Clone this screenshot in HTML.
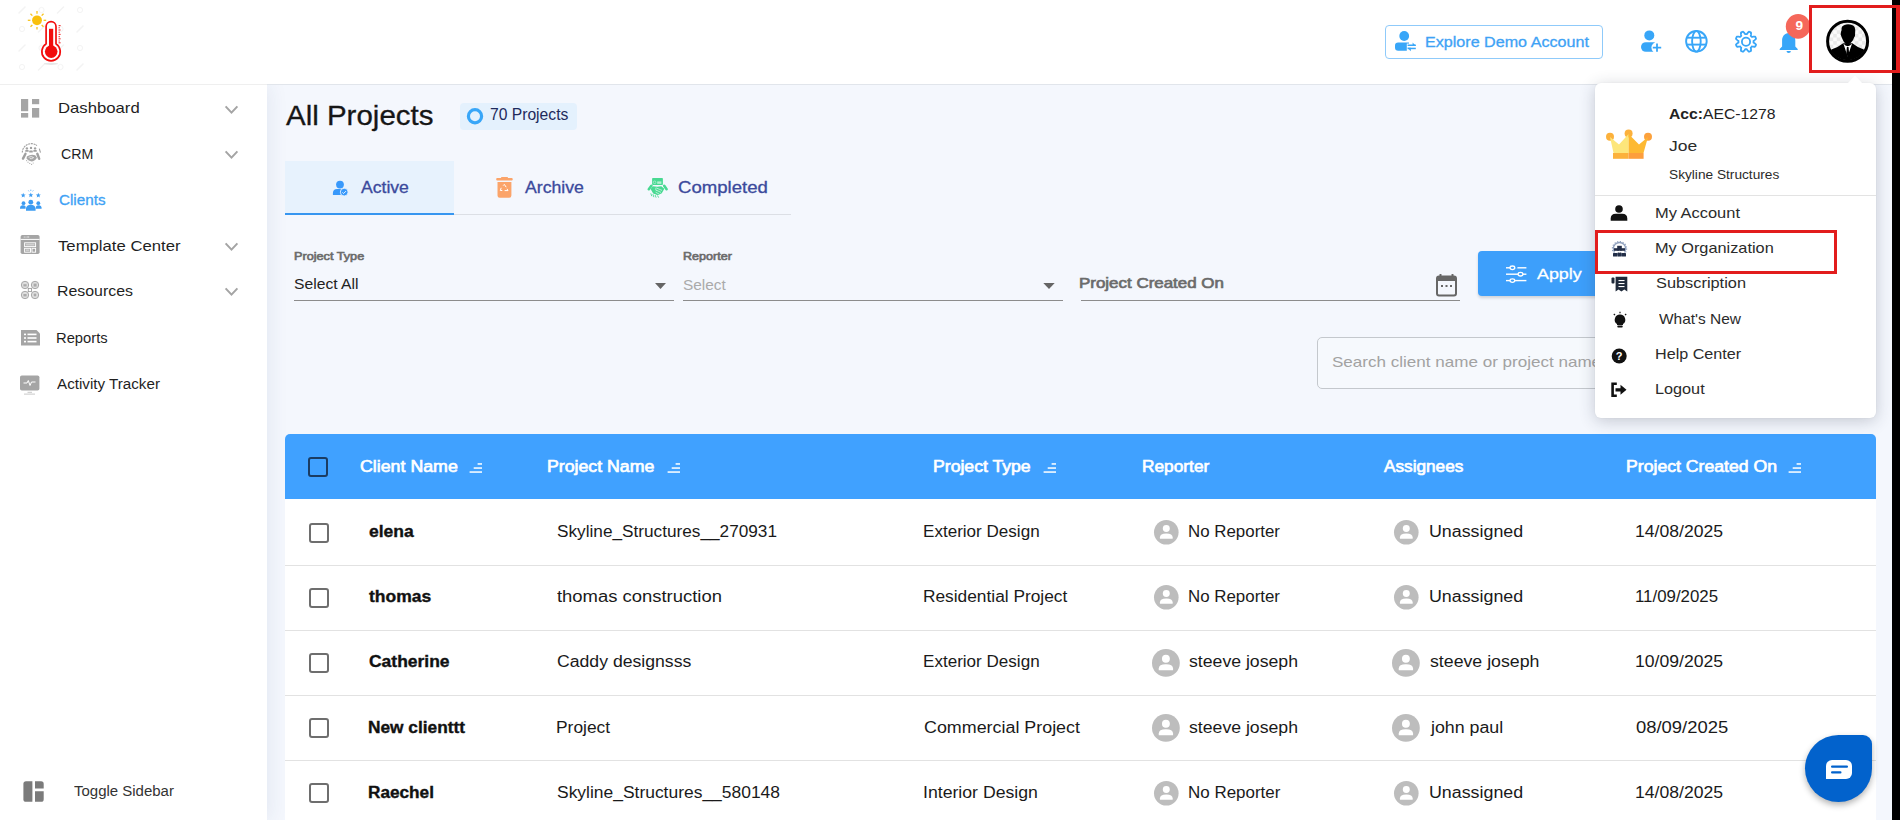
<!DOCTYPE html>
<html><head><meta charset="utf-8"><title>All Projects</title>
<style>
*{margin:0;padding:0;box-sizing:border-box}
html,body{width:1900px;height:820px;overflow:hidden}
body{background:#f4f7fd;font-family:"Liberation Sans",sans-serif;position:relative}
.a{position:absolute}
.t{position:absolute;white-space:nowrap;transform-origin:0 0}
svg{position:absolute;overflow:visible}
.m{-webkit-text-stroke:0.3px currentColor}
.sb{font-weight:400!important;-webkit-text-stroke:0.65px currentColor}
.bb{-webkit-text-stroke:0.35px currentColor}

</style></head><body>
<!-- sidebar -->
<div class="a" style="left:0;top:85px;width:267px;height:735px;background:#fff;box-shadow:3px 0 18px rgba(40,60,110,.08)"></div>
<!-- header -->
<div class="a" style="left:0;top:0;width:1900px;height:85px;background:#fff;border-bottom:1px solid #efefef"></div>
<div class="a" style="left:267px;top:84px;width:1633px;height:1px;background:#e1e5eb"></div>
<!-- tabs -->
<div class="a" style="left:285px;top:161px;width:169px;height:54px;background:#e7f2fd"></div>
<div class="a" style="left:454px;top:213.5px;width:337px;height:1px;background:#dcdfe5"></div>
<div class="a" style="left:285px;top:213px;width:169px;height:2px;background:#3796f0"></div>
<!-- badge -->
<div class="a" style="left:460px;top:103px;width:117px;height:27px;background:#e4f1fd;border-radius:4px"></div>
<!-- filter underlines -->
<div class="a" style="left:294px;top:299.5px;width:380px;height:1.5px;background:#8c8c8c"></div>
<div class="a" style="left:683px;top:299.5px;width:380px;height:1.5px;background:#8c8c8c"></div>
<div class="a" style="left:1080.6px;top:299.5px;width:379px;height:1.5px;background:#8c8c8c"></div>
<!-- apply btn -->
<div class="a" style="left:1478px;top:251px;width:140px;height:45px;background:#3d9ffb;border-radius:4px;box-shadow:0 2px 3px rgba(0,0,0,.15)"></div>
<!-- search -->
<div class="a" style="left:1317.4px;top:337.2px;width:320px;height:51.4px;border:1px solid #c4c8cd;border-radius:5px;background:#f6f9fd"></div>
<!-- table -->
<div class="a" style="left:285px;top:434px;width:1591px;height:65px;background:#40a1ff;border-radius:5px 5px 0 0"></div>
<div class="a" style="left:285px;top:499px;width:1591px;height:330px;background:#fff"></div>
<div class="a" style="left:285px;top:565px;width:1591px;height:1px;background:#e2e2e2"></div>
<div class="a" style="left:285px;top:630px;width:1591px;height:1px;background:#e2e2e2"></div>
<div class="a" style="left:285px;top:695px;width:1591px;height:1px;background:#e2e2e2"></div>
<div class="a" style="left:285px;top:760px;width:1591px;height:1px;background:#e2e2e2"></div>
<!-- checkboxes -->
<div class="a" style="left:307.6px;top:457px;width:20px;height:20px;border:2px solid #1b3c62;border-radius:3px"></div>
<div class="a" style="left:309.4px;top:522.6px;width:20px;height:20px;border:2px solid #6e6e6e;border-radius:3px"></div>
<div class="a" style="left:309.4px;top:587.6px;width:20px;height:20px;border:2px solid #6e6e6e;border-radius:3px"></div>
<div class="a" style="left:309.4px;top:652.6px;width:20px;height:20px;border:2px solid #6e6e6e;border-radius:3px"></div>
<div class="a" style="left:309.4px;top:717.6px;width:20px;height:20px;border:2px solid #6e6e6e;border-radius:3px"></div>
<div class="a" style="left:309.4px;top:782.6px;width:20px;height:20px;border:2px solid #6e6e6e;border-radius:3px"></div>
<!-- explore btn -->
<div class="a" style="left:1385px;top:25px;width:218px;height:34px;border:1px solid #8fcafa;border-radius:4px;background:#fff"></div>

<svg style="left:0px;top:0px" width="90" height="84" viewBox="0 0 90 84"><line x1="19" y1="13" x2="25" y2="7" stroke="#f3f3f3" stroke-width="1.5" stroke-linecap="round"/><circle cx="22" cy="29" r="2.6" fill="none" stroke="#f4f4f4" stroke-width="1"/><line x1="19" y1="51" x2="25" y2="45" stroke="#f3f3f3" stroke-width="1.5" stroke-linecap="round"/><circle cx="22" cy="67" r="2.6" fill="none" stroke="#f4f4f4" stroke-width="1"/><circle cx="41.5" cy="10" r="2.6" fill="none" stroke="#f4f4f4" stroke-width="1"/><line x1="38.5" y1="32" x2="44.5" y2="26" stroke="#f3f3f3" stroke-width="1.5" stroke-linecap="round"/><circle cx="41.5" cy="48" r="2.6" fill="none" stroke="#f4f4f4" stroke-width="1"/><line x1="38.5" y1="70" x2="44.5" y2="64" stroke="#f3f3f3" stroke-width="1.5" stroke-linecap="round"/><line x1="57.5" y1="13" x2="63.5" y2="7" stroke="#f3f3f3" stroke-width="1.5" stroke-linecap="round"/><circle cx="60.5" cy="29" r="2.6" fill="none" stroke="#f4f4f4" stroke-width="1"/><line x1="57.5" y1="51" x2="63.5" y2="45" stroke="#f3f3f3" stroke-width="1.5" stroke-linecap="round"/><circle cx="60.5" cy="67" r="2.6" fill="none" stroke="#f4f4f4" stroke-width="1"/><circle cx="80" cy="10" r="2.6" fill="none" stroke="#f4f4f4" stroke-width="1"/><line x1="77" y1="32" x2="83" y2="26" stroke="#f3f3f3" stroke-width="1.5" stroke-linecap="round"/><circle cx="80" cy="48" r="2.6" fill="none" stroke="#f4f4f4" stroke-width="1"/><line x1="77" y1="70" x2="83" y2="64" stroke="#f3f3f3" stroke-width="1.5" stroke-linecap="round"/></svg>
<svg style="left:0px;top:0px" width="90" height="84" viewBox="0 0 90 84">
<ellipse cx="51" cy="63.8" rx="7" ry="1.1" fill="#e6e6e6"/>
<circle cx="37" cy="20.3" r="4.9" fill="#f9c00c"/><line x1="43.60" y1="20.30" x2="46.20" y2="20.30" stroke="#f8c31a" stroke-width="1.3"/><line x1="41.67" y1="24.97" x2="43.51" y2="26.81" stroke="#f8c31a" stroke-width="1.3"/><line x1="37.00" y1="26.90" x2="37.00" y2="29.50" stroke="#f8c31a" stroke-width="1.3"/><line x1="32.33" y1="24.97" x2="30.49" y2="26.81" stroke="#f8c31a" stroke-width="1.3"/><line x1="30.40" y1="20.30" x2="27.80" y2="20.30" stroke="#f8c31a" stroke-width="1.3"/><line x1="32.33" y1="15.63" x2="30.49" y2="13.79" stroke="#f8c31a" stroke-width="1.3"/><line x1="37.00" y1="13.70" x2="37.00" y2="11.10" stroke="#f8c31a" stroke-width="1.3"/><line x1="41.67" y1="15.63" x2="43.51" y2="13.79" stroke="#f8c31a" stroke-width="1.3"/>
<path d="M46.1 43.9 V26.6 A4.95 4.95 0 0 1 56 26.6 V43.9 A9.2 9.2 0 1 1 46.1 43.9 Z" fill="#fff" stroke="#f20d0d" stroke-width="1.7"/>
<rect x="49" y="28.8" width="4.2" height="20" fill="#f20d0d"/>
<circle cx="51.2" cy="51.6" r="6.3" fill="#f20d0d"/>
<line x1="58.6" y1="25.6" x2="60.6" y2="25.6" stroke="#f03030" stroke-width="1.1"/><line x1="58.6" y1="27.8" x2="59.8" y2="27.8" stroke="#f03030" stroke-width="1.1"/><line x1="58.6" y1="30" x2="60.6" y2="30" stroke="#f03030" stroke-width="1.1"/><line x1="58.6" y1="32.2" x2="59.8" y2="32.2" stroke="#f03030" stroke-width="1.1"/><line x1="58.6" y1="34.4" x2="60.6" y2="34.4" stroke="#f03030" stroke-width="1.1"/><line x1="58.6" y1="36.6" x2="59.8" y2="36.6" stroke="#f03030" stroke-width="1.1"/><line x1="58.6" y1="38.8" x2="60.6" y2="38.8" stroke="#f03030" stroke-width="1.1"/><line x1="58.6" y1="41" x2="59.8" y2="41" stroke="#f03030" stroke-width="1.1"/><line x1="58.6" y1="42.8" x2="60.6" y2="42.8" stroke="#f03030" stroke-width="1.1"/>
</svg>
<svg style="left:15px;top:95px" width="30" height="26" viewBox="15 95 30 26"><g fill="#a5a5a5"><rect x="21" y="99" width="7.2" height="12.2"/><rect x="32" y="99" width="7.2" height="5.2"/><rect x="21" y="113" width="7.2" height="4.6"/><rect x="32" y="108" width="7.2" height="9.6"/></g></svg>
<svg style="left:15px;top:138px" width="35" height="32" viewBox="15 138 35 32"><g fill="none" stroke="#a0a0a0" stroke-width="1.1">
<path d="M22.3 152.6 A9 9 0 0 1 36.9 145.6" stroke-dasharray="2 0.7"/><path d="M39.3 148.6 L40.5 152.6"/></g>
<g fill="#a0a0a0"><circle cx="26.9" cy="148.4" r="1.2"/><circle cx="31" cy="147.9" r="1.2"/><circle cx="35.1" cy="148.4" r="1.2"/>
<rect x="25.2" y="150" width="3.5" height="1.8" rx="0.6"/><rect x="29.2" y="150.6" width="3.6" height="1.9" rx="0.6"/><rect x="33.3" y="150" width="3.5" height="1.8" rx="0.6"/></g>
<g stroke="#a0a0a0" stroke-width="2.4" stroke-linecap="round"><line x1="23" y1="158.6" x2="25.5" y2="153.8"/><line x1="37.3" y1="153.8" x2="39.2" y2="158.8"/></g>
<path d="M26.8 156.5 Q31 153.6 35.2 155.2 L37 157.8 Q34.5 161.5 31.5 161.6 Q28.5 161 26.6 158.8 Z" fill="#a5a5a5"/>
<path d="M28.6 157.4 Q31.2 155.6 33.6 157.6 Q31.6 159.2 29.8 158.6" fill="none" stroke="#fff" stroke-width="0.7"/>
<g fill="#b0b0b0"><circle cx="26.6" cy="160.6" r="0.6"/><circle cx="28" cy="162.2" r="0.6"/><circle cx="29.8" cy="163.4" r="0.6"/><circle cx="31.6" cy="164.4" r="0.6"/><circle cx="33.2" cy="163" r="0.6"/></g></svg>
<svg style="left:15px;top:185px" width="32" height="30" viewBox="15 185 32 30"><g fill="#3d9cf2"><polygon points="23.20,192.80 23.89,194.45 25.67,194.60 24.31,195.76 24.73,197.50 23.20,196.57 21.67,197.50 22.09,195.76 20.73,194.60 22.51,194.45"/><polygon points="30.80,192.60 31.49,194.25 33.27,194.40 31.91,195.56 32.33,197.30 30.80,196.37 29.27,197.30 29.69,195.56 28.33,194.40 30.11,194.25"/><polygon points="38.30,192.80 38.99,194.45 40.77,194.60 39.41,195.76 39.83,197.50 38.30,196.57 36.77,197.50 37.19,195.76 35.83,194.60 37.61,194.45"/>
<circle cx="30.8" cy="202.2" r="2.4"/><circle cx="23.5" cy="203.2" r="1.9"/><circle cx="38.3" cy="203.2" r="1.9"/>
<path d="M26 210.8 V208.3 A4.8 3.6 0 0 1 35.6 208.3 V210.8 Z"/>
<path d="M20 208.8 V207.5 A3 2.4 0 0 1 25.6 206.5 V208.8 Z"/><path d="M41.6 208.8 V207.5 A3 2.4 0 0 0 36 206.5 V208.8 Z"/>
</g><g stroke="#3d9cf2" stroke-width="0.7"><line x1="30.8" y1="189.6" x2="30.8" y2="191"/><line x1="28.3" y1="190.4" x2="29" y2="191.4"/><line x1="33.3" y1="190.4" x2="32.6" y2="191.4"/></g></svg>
<svg style="left:15px;top:230px" width="30" height="30" viewBox="15 230 30 30"><rect x="20.6" y="235" width="19" height="19" rx="1.8" fill="#a5a5a5"/>
<rect x="20.6" y="238.9" width="19" height="1" fill="#fff"/>
<g fill="#fff"><circle cx="24.2" cy="237" r="0.5"/><circle cx="26" cy="237" r="0.5"/><rect x="27.2" y="236.6" width="2" height="0.8"/></g>
<g fill="none" stroke="#fff" stroke-width="0.95"><rect x="24.6" y="242.8" width="11" height="3.8"/><rect x="24.6" y="248.3" width="5.9" height="3.9"/><rect x="32" y="248.3" width="3.6" height="3.9"/></g>
<g fill="#d0d0d0"><rect x="25.6" y="243.8" width="9" height="1.8"/><rect x="25.6" y="249.3" width="3.9" height="1.9"/></g></svg>
<svg style="left:15px;top:276px" width="30" height="30" viewBox="15 276 30 30"><g fill="#dedede" stroke="#a2a2a2" stroke-width="0.9"><circle cx="25" cy="285" r="3.7"/><circle cx="35" cy="285" r="3.7"/><circle cx="25" cy="295" r="3.7"/><circle cx="35" cy="295" r="3.7"/></g>
<rect x="28.3" y="288.4" width="3.2" height="3.2" fill="#fff" stroke="#9e9e9e" stroke-width="0.9"/>
<g fill="#ababab"><rect x="23.4" y="284.2" width="3.2" height="2.2"/><rect x="33.6" y="283.6" width="3" height="3"/><rect x="23.4" y="294" width="3.2" height="2.4"/><circle cx="35" cy="295" r="1.4"/></g></svg>
<svg style="left:15px;top:325px" width="30" height="26" viewBox="15 325 30 26"><path d="M21 330 H36.5 L40 333.5 V345.6 H21 Z" fill="#a5a5a5"/>
<g fill="#fff"><rect x="24" y="333.6" width="2" height="1.6"/><rect x="27.5" y="333.6" width="9" height="1.6"/><rect x="24" y="337.2" width="2" height="1.6"/><rect x="27.5" y="337.2" width="9" height="1.6"/><rect x="24" y="340.8" width="2" height="1.6"/><rect x="27.5" y="340.8" width="9" height="1.6"/></g></svg>
<svg style="left:15px;top:370px" width="30" height="30" viewBox="15 370 30 30"><rect x="20" y="375.4" width="19.4" height="15.2" rx="1.8" fill="#a5a5a5"/>
<polyline points="23.5,383 27,383 28.3,380.5 30,385.5 31.5,382 35.5,382" fill="none" stroke="#fff" stroke-width="1"/>
<rect x="27.5" y="391.8" width="4.5" height="1" fill="#c8c8c8"/><rect x="24" y="393.6" width="11" height="1" fill="#c8c8c8"/></svg>
<svg style="left:20px;top:778px" width="28" height="28" viewBox="20 778 28 28"><g fill="#7b7b7b"><path d="M26 781.3 H32.4 V801.8 H26 A2.6 2.6 0 0 1 23.4 799.2 V783.9 A2.6 2.6 0 0 1 26 781.3 Z"/>
<path d="M35 781.3 H41.1 A2.6 2.6 0 0 1 43.7 783.9 V788.6 H35 Z"/><path d="M35 791.2 H43.7 V799.2 A2.6 2.6 0 0 1 41.1 801.8 H35 Z"/></g></svg>
<svg style="left:220px;top:101.5px" width="24" height="16" viewBox="220 101.5 24 16"><polyline points="225.6,105.9 231.5,112.1 237.4,105.9" fill="none" stroke="#a4a4a4" stroke-width="2"/></svg>
<svg style="left:220px;top:146.5px" width="24" height="16" viewBox="220 146.5 24 16"><polyline points="225.6,150.9 231.5,157.1 237.4,150.9" fill="none" stroke="#a4a4a4" stroke-width="2"/></svg>
<svg style="left:220px;top:239px" width="24" height="16" viewBox="220 239 24 16"><polyline points="225.6,243.4 231.5,249.6 237.4,243.4" fill="none" stroke="#a4a4a4" stroke-width="2"/></svg>
<svg style="left:220px;top:284px" width="24" height="16" viewBox="220 284 24 16"><polyline points="225.6,288.4 231.5,294.6 237.4,288.4" fill="none" stroke="#a4a4a4" stroke-width="2"/></svg>
<svg style="left:1390px;top:28px" width="30" height="26" viewBox="1390 28 30 26"><g fill="#38a6f8"><circle cx="1404.2" cy="36" r="4.9"/><path d="M1398.2 42.4 H1409 V50.8 H1398.2 A3.2 3.2 0 0 1 1395 47.6 V45.6 A3.2 3.2 0 0 1 1398.2 42.4 Z"/></g>
<rect x="1406.8" y="43.6" width="10" height="8.2" fill="#fff"/>
<g fill="#38a6f8"><rect x="1407.6" y="44.5" width="8.2" height="1.5"/><path d="M1412.6 42.6 L1416 46 L1412.6 46 Z"/><rect x="1407.6" y="47.7" width="8.2" height="1.5"/><path d="M1410.8 51.2 L1407.4 47.7 L1410.8 47.7 Z"/></g></svg>
<svg style="left:1636px;top:26px" width="30" height="30" viewBox="1636 26 30 30"><g fill="#38a6f8"><circle cx="1649.3" cy="35.4" r="5"/><path d="M1645.8 42.2 H1654.8 V51.8 H1645.8 A4.8 4.8 0 0 1 1645.8 42.2 Z"/></g>
<circle cx="1657" cy="47.6" r="5.6" fill="#fff"/>
<path d="M1657 43.4 V51.8 M1652.8 47.6 H1661.2" stroke="#38a6f8" stroke-width="1.8"/></svg>
<svg style="left:1680px;top:25px" width="34" height="34" viewBox="1680 25 34 34"><g fill="none" stroke="#38a6f8" stroke-width="1.9"><circle cx="1696.4" cy="41.3" r="10.3"/><ellipse cx="1696.4" cy="41.3" rx="4.3" ry="10.3"/><line x1="1687" y1="37.7" x2="1705.8" y2="37.7"/><line x1="1687" y1="44.6" x2="1705.8" y2="44.6"/></g></svg>
<svg style="left:1730px;top:26px" width="32" height="32" viewBox="1730 26 32 32"><polygon points="1753.55,41.70 1753.55,41.90 1753.54,42.10 1753.53,42.29 1753.51,42.49 1753.84,42.73 1754.23,43.00 1754.63,43.30 1755.03,43.62 1755.40,43.96 1755.74,44.31 1756.02,44.67 1755.94,44.93 1755.85,45.19 1755.76,45.44 1755.65,45.70 1755.55,45.95 1755.43,46.20 1755.31,46.44 1755.18,46.69 1754.74,46.74 1754.25,46.75 1753.74,46.73 1753.23,46.67 1752.74,46.60 1752.28,46.52 1751.87,46.45 1751.74,46.60 1751.61,46.75 1751.48,46.90 1751.34,47.04 1751.20,47.18 1751.05,47.31 1750.90,47.44 1750.75,47.57 1750.82,47.98 1750.90,48.44 1750.97,48.93 1751.03,49.44 1751.05,49.95 1751.04,50.44 1750.99,50.88 1750.74,51.01 1750.50,51.13 1750.25,51.25 1750.00,51.35 1749.74,51.46 1749.49,51.55 1749.23,51.64 1748.97,51.72 1748.61,51.44 1748.26,51.10 1747.92,50.73 1747.60,50.33 1747.30,49.93 1747.03,49.54 1746.79,49.21 1746.59,49.23 1746.40,49.24 1746.20,49.25 1746.00,49.25 1745.80,49.25 1745.60,49.24 1745.41,49.23 1745.21,49.21 1744.97,49.54 1744.70,49.93 1744.40,50.33 1744.08,50.73 1743.74,51.10 1743.39,51.44 1743.03,51.72 1742.77,51.64 1742.51,51.55 1742.26,51.46 1742.00,51.35 1741.75,51.25 1741.50,51.13 1741.26,51.01 1741.01,50.88 1740.96,50.44 1740.95,49.95 1740.97,49.44 1741.03,48.93 1741.10,48.44 1741.18,47.98 1741.25,47.57 1741.10,47.44 1740.95,47.31 1740.80,47.18 1740.66,47.04 1740.52,46.90 1740.39,46.75 1740.26,46.60 1740.13,46.45 1739.72,46.52 1739.26,46.60 1738.77,46.67 1738.26,46.73 1737.75,46.75 1737.26,46.74 1736.82,46.69 1736.69,46.44 1736.57,46.20 1736.45,45.95 1736.35,45.70 1736.24,45.44 1736.15,45.19 1736.06,44.93 1735.98,44.67 1736.26,44.31 1736.60,43.96 1736.97,43.62 1737.37,43.30 1737.77,43.00 1738.16,42.73 1738.49,42.49 1738.47,42.29 1738.46,42.10 1738.45,41.90 1738.45,41.70 1738.45,41.50 1738.46,41.30 1738.47,41.11 1738.49,40.91 1738.16,40.67 1737.77,40.40 1737.37,40.10 1736.97,39.78 1736.60,39.44 1736.26,39.09 1735.98,38.73 1736.06,38.47 1736.15,38.21 1736.24,37.96 1736.35,37.70 1736.45,37.45 1736.57,37.20 1736.69,36.96 1736.82,36.71 1737.26,36.66 1737.75,36.65 1738.26,36.67 1738.77,36.73 1739.26,36.80 1739.72,36.88 1740.13,36.95 1740.26,36.80 1740.39,36.65 1740.52,36.50 1740.66,36.36 1740.80,36.22 1740.95,36.09 1741.10,35.96 1741.25,35.83 1741.18,35.42 1741.10,34.96 1741.03,34.47 1740.97,33.96 1740.95,33.45 1740.96,32.96 1741.01,32.52 1741.26,32.39 1741.50,32.27 1741.75,32.15 1742.00,32.05 1742.26,31.94 1742.51,31.85 1742.77,31.76 1743.03,31.68 1743.39,31.96 1743.74,32.30 1744.08,32.67 1744.40,33.07 1744.70,33.47 1744.97,33.86 1745.21,34.19 1745.41,34.17 1745.60,34.16 1745.80,34.15 1746.00,34.15 1746.20,34.15 1746.40,34.16 1746.59,34.17 1746.79,34.19 1747.03,33.86 1747.30,33.47 1747.60,33.07 1747.92,32.67 1748.26,32.30 1748.61,31.96 1748.97,31.68 1749.23,31.76 1749.49,31.85 1749.74,31.94 1750.00,32.05 1750.25,32.15 1750.50,32.27 1750.74,32.39 1750.99,32.52 1751.04,32.96 1751.05,33.45 1751.03,33.96 1750.97,34.47 1750.90,34.96 1750.82,35.42 1750.75,35.83 1750.90,35.96 1751.05,36.09 1751.20,36.22 1751.34,36.36 1751.48,36.50 1751.61,36.65 1751.74,36.80 1751.87,36.95 1752.28,36.88 1752.74,36.80 1753.23,36.73 1753.74,36.67 1754.25,36.65 1754.74,36.66 1755.18,36.71 1755.31,36.96 1755.43,37.20 1755.55,37.45 1755.65,37.70 1755.76,37.96 1755.85,38.21 1755.94,38.47 1756.02,38.73 1755.74,39.09 1755.40,39.44 1755.03,39.78 1754.63,40.10 1754.23,40.40 1753.84,40.67 1753.51,40.91 1753.53,41.11 1753.54,41.30 1753.55,41.50" fill="none" stroke="#38a6f8" stroke-width="1.8" stroke-linejoin="round"/><circle cx="1746" cy="41.7" r="4.1" fill="none" stroke="#38a6f8" stroke-width="1.8"/></svg>
<svg style="left:1775px;top:28px" width="28" height="30" viewBox="1775 28 28 30"><g fill="#38a6f8"><path d="M1788.7 33 C1784.5 33.3 1782.1 36.5 1782.1 40.5 V46.6 L1779.7 48.9 V50 H1797.7 V48.9 L1795.3 46.6 V40.5 C1795.3 36.5 1792.9 33.3 1788.7 33 Z"/><path d="M1786.5 50.9 H1790.9 A2.2 2.1 0 0 1 1786.5 50.9 Z"/></g></svg>
<svg style="left:470px;top:108px" width="14" height="16" viewBox="470 108 14 16"><circle cx="475" cy="116.2" r="6.6" fill="none" stroke="#38a6f8" stroke-width="3.2"/></svg>
<svg style="left:330px;top:178px" width="22" height="22" viewBox="330 178 22 22"><g fill="#3899fb"><circle cx="340" cy="184.6" r="3.9"/><path d="M332.9 195 V193 A4.2 4.2 0 0 1 337.1 189 H341.5 V195 Z"/></g>
<circle cx="344.2" cy="192.1" r="3.9" fill="#3899fb" stroke="#e7f2fd" stroke-width="0.9"/><polyline points="342.4,192.4 343.6,193.5 346,191.1" fill="none" stroke="#fff" stroke-width="0.9"/></svg>
<svg style="left:492px;top:174px" width="24" height="26" viewBox="492 174 24 26"><g fill="#fba46a"><rect x="496.2" y="178" width="16.5" height="2.4" rx="1"/><rect x="501" y="177" width="7" height="2" rx="0.8"/><path d="M497.5 181.9 H511.4 V195.6 A2.2 2.2 0 0 1 509.2 197.8 H499.7 A2.2 2.2 0 0 1 497.5 195.6 Z"/></g>
<g fill="none" stroke="#fff" stroke-width="1"><path d="M503.2 185.6 L504.3 184.4 L506.2 187.2"/><path d="M501.2 187.8 L500.3 190.5 L502.3 190.5"/><path d="M504.6 190.6 L508 190.6 L507 188.8"/></g></svg>
<svg style="left:644px;top:174px" width="26" height="28" viewBox="644 174 26 28"><rect x="652.1" y="177.9" width="10.8" height="7.1" rx="0.8" fill="#48d992"/>
<circle cx="654.6" cy="182.3" r="1.3" fill="none" stroke="#c9f3dd" stroke-width="0.6"/><rect x="657.2" y="181.4" width="4.2" height="2.4" fill="#b5efd1"/>
<g stroke="#48d992" stroke-width="2.6" stroke-linecap="round"><line x1="648.8" y1="189.2" x2="651.4" y2="185.8"/><line x1="664.2" y1="185.8" x2="666.6" y2="189.2"/></g>
<path d="M650.6 189 L652.8 186.2 L657.2 186.8 L661.3 186.2 L664.3 188.8 L661.8 193.2 L657.8 195.2 L653.2 193.6 Z" fill="#48d992"/>
<g stroke="#e2f9ec" stroke-width="0.7"><line x1="656.8" y1="188.2" x2="662" y2="190.4"/><line x1="656.4" y1="190.2" x2="661" y2="192.4"/><line x1="655.6" y1="192.2" x2="659.4" y2="194.2"/><path d="M656.2 187.5 Q655 189.5 656.6 191" fill="none"/></g>
<g stroke="#48d992" stroke-width="0.9"><line x1="650.8" y1="193.4" x2="651.8" y2="196.2"/><line x1="652.9" y1="194.2" x2="653.9" y2="197.2"/><line x1="655.1" y1="195" x2="656.1" y2="197.6"/><line x1="657.6" y1="195.6" x2="658.6" y2="197.6"/></g></svg>
<svg style="left:650px;top:280px" width="20" height="12" viewBox="650 280 20 12"><polygon points="655,283 666,283 660.5,289" fill="#656565"/></svg>
<svg style="left:1038px;top:280px" width="20" height="12" viewBox="1038 280 20 12"><polygon points="1043.3,283 1054.7,283 1049,289" fill="#656565"/></svg>
<svg style="left:1432px;top:270px" width="30" height="30" viewBox="1432 270 30 30"><g fill="#676767"><rect x="1439.5" y="274" width="2" height="4" rx="0.5"/><rect x="1451.5" y="274" width="2" height="4" rx="0.5"/></g>
<rect x="1437" y="276.5" width="19" height="19" rx="2" fill="none" stroke="#676767" stroke-width="2"/><rect x="1437" y="276.5" width="19" height="4.5" fill="#676767"/>
<g fill="#676767"><rect x="1441" y="285" width="2" height="2"/><rect x="1445.5" y="285" width="2" height="2"/><rect x="1450" y="285" width="2" height="2"/></g></svg>
<svg style="left:1502px;top:262px" width="28" height="24" viewBox="1502 262 28 24"><g stroke="#fff" stroke-width="1.4" fill="none"><line x1="1506" y1="267.8" x2="1526.4" y2="267.8"/><line x1="1506" y1="274.2" x2="1526.4" y2="274.2"/><line x1="1506" y1="280.6" x2="1526.4" y2="280.6"/></g>
<g stroke="#fff" stroke-width="1.3" fill="#3d9ffb"><ellipse cx="1512.4" cy="267.8" rx="2.4" ry="1.8"/><ellipse cx="1520.5" cy="274.2" rx="2.4" ry="1.8"/><ellipse cx="1512.4" cy="280.6" rx="2.4" ry="1.8"/></g>
<rect x="1515.4" y="266.8" width="2" height="2" fill="#3d9ffb"/></svg>
<svg style="left:468px;top:460px" width="16" height="16" viewBox="468 460 16 16"><g fill="#fff"><rect x="477.6" y="463.2" width="4.4" height="1.5"/><rect x="473.7" y="467.3" width="8.3" height="1.5"/><rect x="469.6" y="471.3" width="12.4" height="1.5"/></g></svg>
<svg style="left:665.7px;top:460px" width="16" height="16" viewBox="665.7 460 16 16"><g fill="#fff"><rect x="675.3000000000001" y="463.2" width="4.4" height="1.5"/><rect x="671.4000000000001" y="467.3" width="8.3" height="1.5"/><rect x="667.3000000000001" y="471.3" width="12.4" height="1.5"/></g></svg>
<svg style="left:1042px;top:460px" width="16" height="16" viewBox="1042 460 16 16"><g fill="#fff"><rect x="1051.6" y="463.2" width="4.4" height="1.5"/><rect x="1047.7" y="467.3" width="8.3" height="1.5"/><rect x="1043.6" y="471.3" width="12.4" height="1.5"/></g></svg>
<svg style="left:1787.2px;top:460px" width="16" height="16" viewBox="1787.2 460 16 16"><g fill="#fff"><rect x="1796.8" y="463.2" width="4.4" height="1.5"/><rect x="1792.9" y="467.3" width="8.3" height="1.5"/><rect x="1788.8" y="471.3" width="12.4" height="1.5"/></g></svg>
<svg style="left:1152.7px;top:519.2px" width="26.6" height="26.6" viewBox="1152.7 519.2 26.6 26.6"><circle cx="1166" cy="532.5" r="12.3" fill="#bdbdbd"/>
<circle cx="1166" cy="528.81" r="3.49" fill="#fff"/>
<path d="M1159.64 539.06 V537.52 Q1159.64 533.73 1166.00 533.73 Q1172.36 533.73 1172.36 537.52 V539.06 Z" fill="#fff"/></svg>
<svg style="left:1392.5px;top:519.2px" width="26.6" height="26.6" viewBox="1392.5 519.2 26.6 26.6"><circle cx="1405.8" cy="532.5" r="12.3" fill="#bdbdbd"/>
<circle cx="1405.8" cy="528.81" r="3.49" fill="#fff"/>
<path d="M1399.44 539.06 V537.52 Q1399.44 533.73 1405.80 533.73 Q1412.15 533.73 1412.15 537.52 V539.06 Z" fill="#fff"/></svg>
<svg style="left:1152.7px;top:584.4000000000001px" width="26.6" height="26.6" viewBox="1152.7 584.4000000000001 26.6 26.6"><circle cx="1166" cy="597.7" r="12.3" fill="#bdbdbd"/>
<circle cx="1166" cy="594.01" r="3.49" fill="#fff"/>
<path d="M1159.64 604.26 V602.72 Q1159.64 598.93 1166.00 598.93 Q1172.36 598.93 1172.36 602.72 V604.26 Z" fill="#fff"/></svg>
<svg style="left:1392.5px;top:584.4000000000001px" width="26.6" height="26.6" viewBox="1392.5 584.4000000000001 26.6 26.6"><circle cx="1405.8" cy="597.7" r="12.3" fill="#bdbdbd"/>
<circle cx="1405.8" cy="594.01" r="3.49" fill="#fff"/>
<path d="M1399.44 604.26 V602.72 Q1399.44 598.93 1405.80 598.93 Q1412.15 598.93 1412.15 602.72 V604.26 Z" fill="#fff"/></svg>
<svg style="left:1151.1px;top:647.9px" width="29.8" height="29.8" viewBox="1151.1 647.9 29.8 29.8"><circle cx="1166" cy="662.8" r="13.9" fill="#bdbdbd"/>
<circle cx="1166" cy="658.63" r="3.94" fill="#fff"/>
<path d="M1158.82 670.21 V668.48 Q1158.82 664.19 1166.00 664.19 Q1173.18 664.19 1173.18 668.48 V670.21 Z" fill="#fff"/></svg>
<svg style="left:1390.8999999999999px;top:647.9px" width="29.8" height="29.8" viewBox="1390.8999999999999 647.9 29.8 29.8"><circle cx="1405.8" cy="662.8" r="13.9" fill="#bdbdbd"/>
<circle cx="1405.8" cy="658.63" r="3.94" fill="#fff"/>
<path d="M1398.62 670.21 V668.48 Q1398.62 664.19 1405.80 664.19 Q1412.98 664.19 1412.98 668.48 V670.21 Z" fill="#fff"/></svg>
<svg style="left:1151.1px;top:713.1px" width="29.8" height="29.8" viewBox="1151.1 713.1 29.8 29.8"><circle cx="1166" cy="728" r="13.9" fill="#bdbdbd"/>
<circle cx="1166" cy="723.83" r="3.94" fill="#fff"/>
<path d="M1158.82 735.41 V733.68 Q1158.82 729.39 1166.00 729.39 Q1173.18 729.39 1173.18 733.68 V735.41 Z" fill="#fff"/></svg>
<svg style="left:1390.8999999999999px;top:713.1px" width="29.8" height="29.8" viewBox="1390.8999999999999 713.1 29.8 29.8"><circle cx="1405.8" cy="728" r="13.9" fill="#bdbdbd"/>
<circle cx="1405.8" cy="723.83" r="3.94" fill="#fff"/>
<path d="M1398.62 735.41 V733.68 Q1398.62 729.39 1405.80 729.39 Q1412.98 729.39 1412.98 733.68 V735.41 Z" fill="#fff"/></svg>
<svg style="left:1152.7px;top:779.9000000000001px" width="26.6" height="26.6" viewBox="1152.7 779.9000000000001 26.6 26.6"><circle cx="1166" cy="793.2" r="12.3" fill="#bdbdbd"/>
<circle cx="1166" cy="789.51" r="3.49" fill="#fff"/>
<path d="M1159.64 799.76 V798.22 Q1159.64 794.43 1166.00 794.43 Q1172.36 794.43 1172.36 798.22 V799.76 Z" fill="#fff"/></svg>
<svg style="left:1392.5px;top:779.9000000000001px" width="26.6" height="26.6" viewBox="1392.5 779.9000000000001 26.6 26.6"><circle cx="1405.8" cy="793.2" r="12.3" fill="#bdbdbd"/>
<circle cx="1405.8" cy="789.51" r="3.49" fill="#fff"/>
<path d="M1399.44 799.76 V798.22 Q1399.44 794.43 1405.80 794.43 Q1412.15 794.43 1412.15 798.22 V799.76 Z" fill="#fff"/></svg>
<div class="t" id="t0" style="left:57.5px;top:100.40px;font-size:15px;line-height:15px;font-weight:400;color:#1f1f1f;transform:scaleX(1.1133);">Dashboard</div>
<div class="t" id="t1" style="left:60.5px;top:145.50px;font-size:15px;line-height:15px;font-weight:400;color:#1f1f1f;transform:scaleX(0.9476);">CRM</div>
<div class="t m" id="t2" style="left:59.0px;top:191.70px;font-size:15px;line-height:15px;font-weight:500;color:#3ea2f5;transform:scaleX(1.0143);">Clients</div>
<div class="t" id="t3" style="left:58.0px;top:237.70px;font-size:15px;line-height:15px;font-weight:400;color:#1f1f1f;transform:scaleX(1.1140);">Template Center</div>
<div class="t" id="t4" style="left:56.9px;top:282.70px;font-size:15px;line-height:15px;font-weight:400;color:#1f1f1f;transform:scaleX(1.0599);">Resources</div>
<div class="t" id="t5" style="left:56.3px;top:330.55px;font-size:14px;line-height:14px;font-weight:400;color:#1f1f1f;transform:scaleX(1.0537);">Reports</div>
<div class="t" id="t6" style="left:57.4px;top:377.15px;font-size:14px;line-height:14px;font-weight:400;color:#1f1f1f;transform:scaleX(1.0849);">Activity Tracker</div>
<div class="t" id="t7" style="left:74.2px;top:784.45px;font-size:14px;line-height:14px;font-weight:400;color:#333;transform:scaleX(1.0700);">Toggle Sidebar</div>
<div class="t m" id="t8" style="left:1425.3px;top:33.70px;font-size:15px;line-height:15px;font-weight:500;color:#3ea2f5;transform:scaleX(1.0741);">Explore Demo Account</div>
<div class="t m" id="t9" style="left:286.0px;top:101.90px;font-size:28px;line-height:28px;font-weight:500;color:#161616;transform:scaleX(1.0529);">All Projects</div>
<div class="t" id="t10" style="left:489.7px;top:106.86px;font-size:16px;line-height:16px;font-weight:400;color:#1e2a5c;transform:scaleX(0.9783);">70 Projects</div>
<div class="t m" id="t11" style="left:361.0px;top:179.76px;font-size:16px;line-height:16px;font-weight:500;color:#3b4a9c;transform:scaleX(1.0991);">Active</div>
<div class="t m" id="t12" style="left:524.5px;top:179.76px;font-size:16px;line-height:16px;font-weight:500;color:#3b4a9c;transform:scaleX(1.1038);">Archive</div>
<div class="t m" id="t13" style="left:678.2px;top:179.76px;font-size:16px;line-height:16px;font-weight:500;color:#3b4a9c;transform:scaleX(1.1611);">Completed</div>
<div class="t sb" id="t14" style="left:294.0px;top:251.07px;font-size:11.5px;line-height:11.5px;font-weight:600;color:#6b6b6b;transform:scaleX(1.1020);">Project Type</div>
<div class="t" id="t15" style="left:294.0px;top:276.30px;font-size:15px;line-height:15px;font-weight:400;color:#222;transform:scaleX(1.0451);">Select All</div>
<div class="t sb" id="t16" style="left:683.0px;top:251.27px;font-size:11.5px;line-height:11.5px;font-weight:600;color:#6b6b6b;transform:scaleX(1.0910);">Reporter</div>
<div class="t" id="t17" style="left:683.0px;top:276.60px;font-size:15px;line-height:15px;font-weight:400;color:#aaa;transform:scaleX(1.0277);">Select</div>
<div class="t sb" id="t18" style="left:1079.4px;top:275.83px;font-size:14.5px;line-height:14.5px;font-weight:600;color:#6b6b6b;transform:scaleX(1.1678);">Project Created On</div>
<div class="t m" id="t19" style="left:1537.0px;top:265.88px;font-size:15.5px;line-height:15.5px;font-weight:500;color:#fff;transform:scaleX(1.1532);">Apply</div>
<div class="t" id="t20" style="left:1332.3px;top:354.20px;font-size:15px;line-height:15px;font-weight:400;color:#a2a2a2;transform:scaleX(1.1364);">Search client name or project name</div>
<div class="t sb" id="t21" style="left:359.6px;top:459.06px;font-size:16px;line-height:16px;font-weight:600;color:#fff;transform:scaleX(1.1108);">Client Name</div>
<div class="t sb" id="t22" style="left:547.4px;top:459.06px;font-size:16px;line-height:16px;font-weight:600;color:#fff;transform:scaleX(1.1070);">Project Name</div>
<div class="t sb" id="t23" style="left:932.5px;top:459.06px;font-size:16px;line-height:16px;font-weight:600;color:#fff;transform:scaleX(1.1019);">Project Type</div>
<div class="t sb" id="t24" style="left:1142.0px;top:459.06px;font-size:16px;line-height:16px;font-weight:600;color:#fff;transform:scaleX(1.0804);">Reporter</div>
<div class="t sb" id="t25" style="left:1384.0px;top:459.06px;font-size:16px;line-height:16px;font-weight:600;color:#fff;transform:scaleX(1.0742);">Assignees</div>
<div class="t sb" id="t26" style="left:1626.4px;top:459.06px;font-size:16px;line-height:16px;font-weight:600;color:#fff;transform:scaleX(1.1033);">Project Created On</div>
<div class="t bb" id="t27" style="left:368.6px;top:523.86px;font-size:16px;line-height:16px;font-weight:700;color:#111;transform:scaleX(1.0923);">elena</div>
<div class="t" id="t28" style="left:557.4px;top:523.86px;font-size:16px;line-height:16px;font-weight:400;color:#1a1a1a;transform:scaleX(1.0753);">Skyline_Structures__270931</div>
<div class="t" id="t29" style="left:923.1px;top:523.86px;font-size:16px;line-height:16px;font-weight:400;color:#1a1a1a;transform:scaleX(1.0663);">Exterior Design</div>
<div class="t" id="t30" style="left:1187.9px;top:523.86px;font-size:16px;line-height:16px;font-weight:400;color:#1a1a1a;transform:scaleX(1.0551);">No Reporter</div>
<div class="t" id="t31" style="left:1428.5px;top:523.86px;font-size:16px;line-height:16px;font-weight:400;color:#1a1a1a;transform:scaleX(1.1138);">Unassigned</div>
<div class="t" id="t32" style="left:1634.6px;top:523.86px;font-size:16px;line-height:16px;font-weight:400;color:#1a1a1a;transform:scaleX(1.0988);">14/08/2025</div>
<div class="t bb" id="t33" style="left:368.6px;top:589.06px;font-size:16px;line-height:16px;font-weight:700;color:#111;transform:scaleX(1.0930);">thomas</div>
<div class="t" id="t34" style="left:557.4px;top:589.06px;font-size:16px;line-height:16px;font-weight:400;color:#1a1a1a;transform:scaleX(1.1519);">thomas construction</div>
<div class="t" id="t35" style="left:923.1px;top:589.06px;font-size:16px;line-height:16px;font-weight:400;color:#1a1a1a;transform:scaleX(1.0816);">Residential Project</div>
<div class="t" id="t36" style="left:1187.9px;top:589.06px;font-size:16px;line-height:16px;font-weight:400;color:#1a1a1a;transform:scaleX(1.0551);">No Reporter</div>
<div class="t" id="t37" style="left:1428.5px;top:589.06px;font-size:16px;line-height:16px;font-weight:400;color:#1a1a1a;transform:scaleX(1.1138);">Unassigned</div>
<div class="t" id="t38" style="left:1634.6px;top:589.06px;font-size:16px;line-height:16px;font-weight:400;color:#1a1a1a;transform:scaleX(1.0527);">11/09/2025</div>
<div class="t bb" id="t39" style="left:368.6px;top:654.46px;font-size:16px;line-height:16px;font-weight:700;color:#111;transform:scaleX(1.0920);">Catherine</div>
<div class="t" id="t40" style="left:557.4px;top:654.46px;font-size:16px;line-height:16px;font-weight:400;color:#1a1a1a;transform:scaleX(1.1022);">Caddy designsss</div>
<div class="t" id="t41" style="left:923.1px;top:654.46px;font-size:16px;line-height:16px;font-weight:400;color:#1a1a1a;transform:scaleX(1.0663);">Exterior Design</div>
<div class="t" id="t42" style="left:1189.0px;top:654.46px;font-size:16px;line-height:16px;font-weight:400;color:#1a1a1a;transform:scaleX(1.1039);">steeve joseph</div>
<div class="t" id="t43" style="left:1429.6px;top:654.46px;font-size:16px;line-height:16px;font-weight:400;color:#1a1a1a;transform:scaleX(1.1080);">steeve joseph</div>
<div class="t" id="t44" style="left:1634.6px;top:654.46px;font-size:16px;line-height:16px;font-weight:400;color:#1a1a1a;transform:scaleX(1.0988);">10/09/2025</div>
<div class="t bb" id="t45" style="left:367.5px;top:719.66px;font-size:16px;line-height:16px;font-weight:700;color:#111;transform:scaleX(1.0798);">New clienttt</div>
<div class="t" id="t46" style="left:556.3px;top:719.66px;font-size:16px;line-height:16px;font-weight:400;color:#1a1a1a;transform:scaleX(1.0861);">Project</div>
<div class="t" id="t47" style="left:924.2px;top:719.66px;font-size:16px;line-height:16px;font-weight:400;color:#1a1a1a;transform:scaleX(1.1174);">Commercial Project</div>
<div class="t" id="t48" style="left:1189.0px;top:719.66px;font-size:16px;line-height:16px;font-weight:400;color:#1a1a1a;transform:scaleX(1.1039);">steeve joseph</div>
<div class="t" id="t49" style="left:1430.7px;top:719.66px;font-size:16px;line-height:16px;font-weight:400;color:#1a1a1a;transform:scaleX(1.1118);">john paul</div>
<div class="t" id="t50" style="left:1635.7px;top:719.66px;font-size:16px;line-height:16px;font-weight:400;color:#1a1a1a;transform:scaleX(1.1512);">08/09/2025</div>
<div class="t bb" id="t51" style="left:367.5px;top:784.86px;font-size:16px;line-height:16px;font-weight:700;color:#111;transform:scaleX(1.0747);">Raechel</div>
<div class="t" id="t52" style="left:557.4px;top:784.86px;font-size:16px;line-height:16px;font-weight:400;color:#1a1a1a;transform:scaleX(1.0900);">Skyline_Structures__580148</div>
<div class="t" id="t53" style="left:923.1px;top:784.86px;font-size:16px;line-height:16px;font-weight:400;color:#1a1a1a;transform:scaleX(1.1043);">Interior Design</div>
<div class="t" id="t54" style="left:1187.9px;top:784.86px;font-size:16px;line-height:16px;font-weight:400;color:#1a1a1a;transform:scaleX(1.0597);">No Reporter</div>
<div class="t" id="t55" style="left:1428.5px;top:784.86px;font-size:16px;line-height:16px;font-weight:400;color:#1a1a1a;transform:scaleX(1.1138);">Unassigned</div>
<div class="t" id="t56" style="left:1634.6px;top:784.86px;font-size:16px;line-height:16px;font-weight:400;color:#1a1a1a;transform:scaleX(1.0988);">14/08/2025</div>
<!-- dropdown -->
<div class="a" style="left:1595px;top:83px;width:281px;height:334.5px;background:#fff;border-radius:6px;box-shadow:0 3px 16px rgba(40,50,70,.24),0 0 2px rgba(0,0,0,.06)"></div>
<svg style="left:1845px;top:74px" width="20" height="12"><path d="M2 10 L10 1.5 L18 10 Z" fill="#fff"/></svg>
<div class="a" style="left:1595px;top:195px;width:281px;height:1px;background:#e3e3e3"></div>
<div class="a" style="left:1595px;top:230.2px;width:242px;height:43.6px;border:3px solid #e21d1d"></div>
<!-- chat -->
<div class="a" style="left:1805px;top:735px;width:67px;height:67px;background:#0262cc;border-radius:50% 9px 50% 50%;box-shadow:0 3px 6px rgba(0,0,0,.3)"></div>

<svg style="left:1780px;top:10px" width="34" height="34" viewBox="1780 10 34 34"><circle cx="1798.1" cy="26.4" r="12.3" fill="#f5675a"/><text x="1799.3" y="30.1" font-family="Liberation Sans" font-weight="700" font-size="13.6" fill="#fff" text-anchor="middle">9</text></svg>
<svg style="left:1820px;top:14px" width="56" height="56" viewBox="1820 14 56 56"><defs><clipPath id="avc"><circle cx="1847.6" cy="41.2" r="19"/></clipPath></defs>
<circle cx="1847.6" cy="41.2" r="19" fill="#fbfbfb"/>
<g clip-path="url(#avc)"><rect x="1826.0" y="19.5" width="3.6" height="3.6" fill="#e9e9e9"/><rect x="1826.0" y="26.7" width="3.6" height="3.6" fill="#e9e9e9"/><rect x="1826.0" y="33.9" width="3.6" height="3.6" fill="#e9e9e9"/><rect x="1826.0" y="41.1" width="3.6" height="3.6" fill="#e9e9e9"/><rect x="1826.0" y="48.3" width="3.6" height="3.6" fill="#e9e9e9"/><rect x="1826.0" y="55.5" width="3.6" height="3.6" fill="#e9e9e9"/><rect x="1829.6" y="23.1" width="3.6" height="3.6" fill="#e9e9e9"/><rect x="1829.6" y="30.3" width="3.6" height="3.6" fill="#e9e9e9"/><rect x="1829.6" y="37.5" width="3.6" height="3.6" fill="#e9e9e9"/><rect x="1829.6" y="44.7" width="3.6" height="3.6" fill="#e9e9e9"/><rect x="1829.6" y="51.9" width="3.6" height="3.6" fill="#e9e9e9"/><rect x="1829.6" y="59.1" width="3.6" height="3.6" fill="#e9e9e9"/><rect x="1833.2" y="19.5" width="3.6" height="3.6" fill="#e9e9e9"/><rect x="1833.2" y="26.7" width="3.6" height="3.6" fill="#e9e9e9"/><rect x="1833.2" y="33.9" width="3.6" height="3.6" fill="#e9e9e9"/><rect x="1833.2" y="41.1" width="3.6" height="3.6" fill="#e9e9e9"/><rect x="1833.2" y="48.3" width="3.6" height="3.6" fill="#e9e9e9"/><rect x="1833.2" y="55.5" width="3.6" height="3.6" fill="#e9e9e9"/><rect x="1836.8" y="23.1" width="3.6" height="3.6" fill="#e9e9e9"/><rect x="1836.8" y="30.3" width="3.6" height="3.6" fill="#e9e9e9"/><rect x="1836.8" y="37.5" width="3.6" height="3.6" fill="#e9e9e9"/><rect x="1836.8" y="44.7" width="3.6" height="3.6" fill="#e9e9e9"/><rect x="1836.8" y="51.9" width="3.6" height="3.6" fill="#e9e9e9"/><rect x="1836.8" y="59.1" width="3.6" height="3.6" fill="#e9e9e9"/><rect x="1840.4" y="19.5" width="3.6" height="3.6" fill="#e9e9e9"/><rect x="1840.4" y="26.7" width="3.6" height="3.6" fill="#e9e9e9"/><rect x="1840.4" y="33.9" width="3.6" height="3.6" fill="#e9e9e9"/><rect x="1840.4" y="41.1" width="3.6" height="3.6" fill="#e9e9e9"/><rect x="1840.4" y="48.3" width="3.6" height="3.6" fill="#e9e9e9"/><rect x="1840.4" y="55.5" width="3.6" height="3.6" fill="#e9e9e9"/><rect x="1844.0" y="23.1" width="3.6" height="3.6" fill="#e9e9e9"/><rect x="1844.0" y="30.3" width="3.6" height="3.6" fill="#e9e9e9"/><rect x="1844.0" y="37.5" width="3.6" height="3.6" fill="#e9e9e9"/><rect x="1844.0" y="44.7" width="3.6" height="3.6" fill="#e9e9e9"/><rect x="1844.0" y="51.9" width="3.6" height="3.6" fill="#e9e9e9"/><rect x="1844.0" y="59.1" width="3.6" height="3.6" fill="#e9e9e9"/><rect x="1847.6" y="19.5" width="3.6" height="3.6" fill="#e9e9e9"/><rect x="1847.6" y="26.7" width="3.6" height="3.6" fill="#e9e9e9"/><rect x="1847.6" y="33.9" width="3.6" height="3.6" fill="#e9e9e9"/><rect x="1847.6" y="41.1" width="3.6" height="3.6" fill="#e9e9e9"/><rect x="1847.6" y="48.3" width="3.6" height="3.6" fill="#e9e9e9"/><rect x="1847.6" y="55.5" width="3.6" height="3.6" fill="#e9e9e9"/><rect x="1851.2" y="23.1" width="3.6" height="3.6" fill="#e9e9e9"/><rect x="1851.2" y="30.3" width="3.6" height="3.6" fill="#e9e9e9"/><rect x="1851.2" y="37.5" width="3.6" height="3.6" fill="#e9e9e9"/><rect x="1851.2" y="44.7" width="3.6" height="3.6" fill="#e9e9e9"/><rect x="1851.2" y="51.9" width="3.6" height="3.6" fill="#e9e9e9"/><rect x="1851.2" y="59.1" width="3.6" height="3.6" fill="#e9e9e9"/><rect x="1854.8" y="19.5" width="3.6" height="3.6" fill="#e9e9e9"/><rect x="1854.8" y="26.7" width="3.6" height="3.6" fill="#e9e9e9"/><rect x="1854.8" y="33.9" width="3.6" height="3.6" fill="#e9e9e9"/><rect x="1854.8" y="41.1" width="3.6" height="3.6" fill="#e9e9e9"/><rect x="1854.8" y="48.3" width="3.6" height="3.6" fill="#e9e9e9"/><rect x="1854.8" y="55.5" width="3.6" height="3.6" fill="#e9e9e9"/><rect x="1858.4" y="23.1" width="3.6" height="3.6" fill="#e9e9e9"/><rect x="1858.4" y="30.3" width="3.6" height="3.6" fill="#e9e9e9"/><rect x="1858.4" y="37.5" width="3.6" height="3.6" fill="#e9e9e9"/><rect x="1858.4" y="44.7" width="3.6" height="3.6" fill="#e9e9e9"/><rect x="1858.4" y="51.9" width="3.6" height="3.6" fill="#e9e9e9"/><rect x="1858.4" y="59.1" width="3.6" height="3.6" fill="#e9e9e9"/><rect x="1862.0" y="19.5" width="3.6" height="3.6" fill="#e9e9e9"/><rect x="1862.0" y="26.7" width="3.6" height="3.6" fill="#e9e9e9"/><rect x="1862.0" y="33.9" width="3.6" height="3.6" fill="#e9e9e9"/><rect x="1862.0" y="41.1" width="3.6" height="3.6" fill="#e9e9e9"/><rect x="1862.0" y="48.3" width="3.6" height="3.6" fill="#e9e9e9"/><rect x="1862.0" y="55.5" width="3.6" height="3.6" fill="#e9e9e9"/><rect x="1865.6" y="23.1" width="3.6" height="3.6" fill="#e9e9e9"/><rect x="1865.6" y="30.3" width="3.6" height="3.6" fill="#e9e9e9"/><rect x="1865.6" y="37.5" width="3.6" height="3.6" fill="#e9e9e9"/><rect x="1865.6" y="44.7" width="3.6" height="3.6" fill="#e9e9e9"/><rect x="1865.6" y="51.9" width="3.6" height="3.6" fill="#e9e9e9"/><rect x="1865.6" y="59.1" width="3.6" height="3.6" fill="#e9e9e9"/>
<path d="M1826 53 L1832 49.2 Q1838.5 47 1843.2 43.2 L1852.3 43.2 Q1857 47 1863.2 49.2 L1869.5 53 V64 H1826 Z" fill="#000"/>
<path d="M1841.6 30 Q1840.8 25.3 1846.3 24.4 Q1852.3 23.8 1854.6 27 Q1855.6 29.5 1855.1 33.2 Q1855.4 36 1854.2 37.2 Q1852.6 42.2 1848.4 44.4 Q1845 44.2 1843.1 40.4 Q1841.1 36.2 1840.6 34.2 Q1840.8 32 1841.6 30 Z" fill="#000"/>
<path d="M1843.4 43.6 L1847.6 56.5 L1852.1 43.6 L1849.9 45.6 L1847.7 46.2 L1845.5 45.6 Z" fill="#fff"/>
<path d="M1846.9 47 L1848.5 47 L1849.2 54.2 L1847.7 56.4 L1846.2 54.2 Z" fill="#000"/>
</g>
<circle cx="1847.6" cy="41.2" r="20" fill="none" stroke="#000" stroke-width="3"/></svg>
<svg style="left:1600px;top:124px" width="56" height="40" viewBox="1600 124 56 40"><circle cx="1610" cy="136.8" r="4" fill="#fcb13c"/><circle cx="1648" cy="136.8" r="4" fill="#fca13c"/><circle cx="1628.6" cy="133.6" r="4" fill="#fcb13c"/>
<path d="M1610 137 L1619 144.5 L1628.6 134 V153 H1613.5 Z" fill="#fde67b"/><path d="M1648 137 L1639 144.5 L1628.6 134 V153 H1643.5 Z" fill="#fdb932"/>
<rect x="1613" y="153" width="15.6" height="5.8" fill="#fcb13c"/><rect x="1628.6" y="153" width="15" height="5.8" fill="#fd9e3d"/></svg>
<svg style="left:1606px;top:202px" width="26" height="24" viewBox="1606 202 26 24"><g fill="#111"><circle cx="1619" cy="209" r="3.8"/><path d="M1610.7 220.7 V218.6 Q1610.7 213.8 1615.8 213.8 H1622.2 Q1627.3 213.8 1627.3 218.6 V220.7 Z"/></g></svg>
<svg style="left:1606px;top:238px" width="26" height="24" viewBox="1606 238 26 24"><circle cx="1619.5" cy="248.6" r="6.1" fill="none" stroke="#90a1be" stroke-width="1.3"/>
<circle cx="1619.5" cy="248.6" r="7.1" fill="none" stroke="#90a1be" stroke-width="1.2" stroke-dasharray="1.2 1.6"/>
<g fill="#232f48"><rect x="1617.2" y="245.8" width="4.6" height="4.8"/><rect x="1614" y="248.2" width="11" height="2.6"/>
<rect x="1613" y="253" width="4.4" height="3.6" rx="0.6"/><rect x="1617.5" y="252.6" width="4" height="4" rx="0.6"/><rect x="1621.6" y="253" width="4.4" height="3.6" rx="0.6"/></g>
<g fill="#fff"><circle cx="1615.4" cy="252.2" r="0.9"/><circle cx="1619.5" cy="251.6" r="0.9"/><circle cx="1623.6" cy="252.2" r="0.9"/></g></svg>
<svg style="left:1606px;top:272px" width="26" height="24" viewBox="1606 272 26 24"><g fill="#1f2a3a"><rect x="1611.5" y="277.5" width="3" height="6" rx="1"/><path d="M1615.6 276.8 H1627.3 V291.5 L1624.3 289.6 L1621.4 291.5 L1618.5 289.6 L1615.6 291.5 Z"/></g>
<g fill="#fff"><rect x="1618.5" y="280" width="6" height="1.1"/><rect x="1618.5" y="283" width="6" height="1.1"/><rect x="1618.5" y="286" width="6" height="1.1"/></g></svg>
<svg style="left:1606px;top:306px" width="26" height="26" viewBox="1606 306 26 26"><g fill="#111"><path d="M1620 314.5 A5.2 5.2 0 0 1 1623 324 V325 H1617 V324 A5.2 5.2 0 0 1 1620 314.5 Z"/><rect x="1617.3" y="325.6" width="5.4" height="1.9" rx="0.8"/></g>
<g stroke="#111" stroke-width="1.2"><line x1="1620" y1="311.7" x2="1620" y2="313.2"/><line x1="1613.8" y1="314" x2="1615" y2="315.2"/><line x1="1626.2" y1="314" x2="1625" y2="315.2"/></g></svg>
<svg style="left:1606px;top:344px" width="26" height="24" viewBox="1606 344 26 24"><circle cx="1619.2" cy="356" r="7.5" fill="#111"/><text x="1619.2" y="360" font-family="Liberation Sans" font-weight="700" font-size="11" fill="#fff" text-anchor="middle">?</text></svg>
<svg style="left:1606px;top:378px" width="26" height="24" viewBox="1606 378 26 24"><path d="M1616.8 383.8 H1612.6 V395.8 H1616.8" fill="none" stroke="#111" stroke-width="2.6"/><path d="M1615.5 388.2 H1620.5 V384.8 L1626.5 389.8 L1620.5 394.8 V391.4 H1615.5 Z" fill="#111"/></svg>
<svg style="left:1820px;top:755px" width="40" height="30" viewBox="1820 755 40 30"><path d="M1832 760 H1846 A6 6 0 0 1 1852 766 V773 A6 6 0 0 1 1846 779 H1826 V766 A6 6 0 0 1 1832 760 Z" fill="#fff"/>
<rect x="1831" y="765.5" width="17" height="2.3" rx="1.1" fill="#0262cc"/><rect x="1831" y="771.3" width="10.5" height="2.3" rx="1.1" fill="#0262cc"/></svg>
<div class="t" id="t57" style="left:1669.0px;top:105.50px;font-size:15px;line-height:15px;font-weight:400;color:#222;transform:scaleX(1.0466);"><b style="font-weight:700">Acc:</b>AEC-1278</div>
<div class="t" id="t58" style="left:1669.0px;top:138.30px;font-size:15px;line-height:15px;font-weight:400;color:#2b2b2b;transform:scaleX(1.1660);">Joe</div>
<div class="t" id="t59" style="left:1669.0px;top:169.42px;font-size:12.5px;line-height:12.5px;font-weight:400;color:#2b2b2b;transform:scaleX(1.0947);">Skyline Structures</div>
<div class="t" id="t60" style="left:1654.8px;top:205.53px;font-size:14.5px;line-height:14.5px;font-weight:400;color:#2b2b2b;transform:scaleX(1.1335);">My Account</div>
<div class="t" id="t61" style="left:1654.8px;top:240.93px;font-size:14.5px;line-height:14.5px;font-weight:400;color:#2b2b2b;transform:scaleX(1.1243);">My Organization</div>
<div class="t" id="t62" style="left:1655.9px;top:276.43px;font-size:14.5px;line-height:14.5px;font-weight:400;color:#2b2b2b;transform:scaleX(1.1276);">Subscription</div>
<div class="t" id="t63" style="left:1658.5px;top:312.03px;font-size:14.5px;line-height:14.5px;font-weight:400;color:#2b2b2b;transform:scaleX(1.0668);">What's New</div>
<div class="t" id="t64" style="left:1654.8px;top:347.43px;font-size:14.5px;line-height:14.5px;font-weight:400;color:#2b2b2b;transform:scaleX(1.1131);">Help Center</div>
<div class="t" id="t65" style="left:1654.8px;top:382.13px;font-size:14.5px;line-height:14.5px;font-weight:400;color:#2b2b2b;transform:scaleX(1.1195);">Logout</div>
<!-- header red box -->
<div class="a" style="left:1892px;top:0;width:8px;height:820px;background:#000"></div>
<div class="a" style="left:1809px;top:5px;width:91px;height:68px;border:3px solid #e21d1d;border-right-width:4px"></div>

</body></html>
